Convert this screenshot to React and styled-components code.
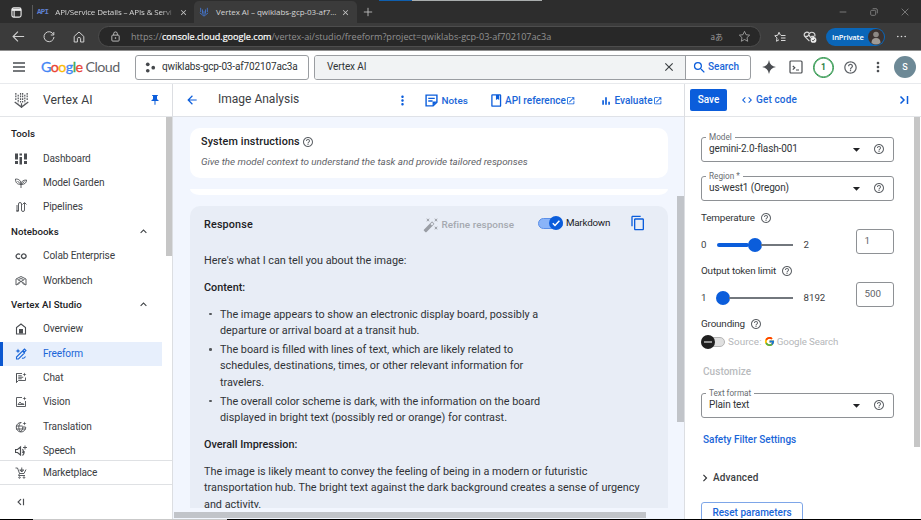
import React from "react";
import styled, { createGlobalStyle } from "styled-components";
import { FcGoogle } from "react-icons/fc";
import {
  MdClose, MdSearch, MdHelpOutline, MdMoreVert, MdArrowBack, MdPushPin, MdCode,
  MdOpenInNew, MdContentCopy, MdExpandLess, MdChevronRight, MdArrowDropDown, MdAutoFixHigh,
} from "react-icons/md";

const GlobalStyle = createGlobalStyle`
  * { box-sizing: border-box; }
  html, body { margin: 0; padding: 0; overflow: hidden; background: #fff; }
  body { font-family: Roboto, "Liberation Sans", sans-serif; color: #3c4043; font-size: 10px; }
`;

const blue = "#0b5ddb";

const Page = styled.div`
  width: 921px;
  height: 520px;
  display: flex;
  flex-direction: column;
  overflow: hidden;
  background: #fff;
`;

/* Anything on one line: a label with its own size, colour and tracking. */
const Label = styled.span`
  white-space: nowrap;
  font-family: ${(p) => p.$font || "inherit"};
  font-size: ${(p) => p.$size || 10}px;
  font-weight: ${(p) => p.$weight || 400};
  color: ${(p) => p.$color || "#3c4043"};
  letter-spacing: ${(p) => p.$track || 0}px;
  margin-left: ${(p) => p.$ml || 0}px;
  line-height: 16px;
`;

const Svg = styled.svg`
  flex: none;
  display: block;
  width: ${(p) => p.$s || 12}px;
  height: ${(p) => p.$s || 12}px;
  margin-left: ${(p) => p.$ml || 0}px;
  color: ${(p) => p.$color || "currentColor"};
`;

const Slot = styled.span`
  flex: none;
  display: flex;
  font-size: ${(p) => p.$s || 12}px;
  color: ${(p) => p.$color || "#5f6368"};
  margin-left: ${(p) => p.$ml || 0}px;
`;

const Spacer = styled.div`
  flex: 1;
`;

/* ---------- browser chrome ---------- */
const segoe = '"Open Sans", "Noto Sans", sans-serif';

const TopStrip = styled.div`
  height: 1px;
  flex: none;
  background: linear-gradient(90deg, #2d2d2d 379px, #0f5fae 379px 412px, #a9adad 412px 542px, #2d2d2d 542px);
`;

const TabStrip = styled.div`
  height: 22px;
  flex: none;
  display: flex;
  align-items: center;
  background: #2d2d2d;
  padding-left: 11px;
`;

const TabDivider = styled.div`
  width: 1px;
  height: 14px;
  margin-left: 10px;
  background: #5a5a5a;
`;

const Tab = styled.div`
  height: 22px;
  width: ${(p) => p.$w}px;
  display: flex;
  align-items: center;
  background: ${(p) => (p.$active ? "#3b3b3b" : "transparent")};
  border-radius: 5px 5px 0 0;
`;

const TabTitle = styled(Label)`
  width: ${(p) => p.$w}px;
  mask-image: ${(p) => (p.$fade ? "linear-gradient(90deg, #000 88%, transparent)" : "none")};
`;

const AddressRow = styled.div`
  height: 27px;
  flex: none;
  display: flex;
  align-items: center;
  background: #3b3b3b;
  padding-left: 12px;
`;

const UrlBar = styled.div`
  width: 663px;
  height: 21px;
  margin-left: 13px;
  border: 1px solid #4d4d4d;
  border-radius: 11px;
  background: #282828;
  display: flex;
  align-items: center;
`;

const Url = styled(Label)`
  b { font-weight: 400; color: #fff; -webkit-text-stroke: 0.2px #fff; }
`;

const PrivatePill = styled.div`
  width: 59px;
  height: 18px;
  margin-left: 9px;
  border-radius: 9px;
  background: #0a66b8;
  display: flex;
  align-items: center;
  padding-left: 6px;
`;

const Avatar = styled.div`
  width: ${(p) => p.$s}px;
  height: ${(p) => p.$s}px;
  flex: none;
  border-radius: 50%;
  background: ${(p) => p.$bg};
  margin-left: ${(p) => p.$ml || 0}px;
  display: flex;
  align-items: center;
  justify-content: center;
  overflow: hidden;
`;

function BrowserChrome() {
  return (
    <>
      <TopStrip />
      <TabStrip>
        <Svg viewBox="0 0 12 12" $s={11} fill="none" stroke="#eee" strokeWidth="1.2">
          <rect x="1" y="1" width="10" height="10" rx="2" />
          <path d="M1 3h10" strokeWidth="2.4" /><path d="M3.4 3v8" />
        </Svg>
        <TabDivider />
        <Tab $w={161}>
          <Label $font='"Liberation Mono", monospace' $size={7.4} $weight={700} $color="#5f80d0" $ml={4} $track={-0.7}>API</Label>
          <TabTitle $font={segoe} $size={8} $color="#d6d6d6" $ml={7} $w={121} $track={-0.14} $fade>API/Service Details – APIs &amp; Servi</TabTitle>
          <Slot $s={9} $color="#c8c8c8" $ml={3}><MdClose /></Slot>
        </Tab>
        <Tab $active $w={163}>
          <Svg viewBox="0 0 12 12" $s={10} $ml={5} fill="none" stroke="#4476cf" strokeWidth="1.1">
            <path d="M2 1v5M4.2 3v5M6 5v5M7.8 3v5M10 1v5M1 7l5 4 5-4" />
          </Svg>
          <TabTitle $font={segoe} $size={8} $color="#d6d6d6" $ml={7} $w={124} $track={-0.05}>Vertex AI – qwiklabs-gcp-03-af7...</TabTitle>
          <Slot $s={9} $color="#c8c8c8" $ml={1}><MdClose /></Slot>
        </Tab>
        <Svg viewBox="0 0 12 12" $s={10} $ml={6} stroke="#c8c8c8" strokeWidth="1"><path d="M6 1v10M1 6h10" /></Svg>
        <Spacer />
        <Svg viewBox="0 0 12 12" $s={8} stroke="#8c8c8c" strokeWidth="1.2"><path d="M1 6h10" /></Svg>
        <Svg viewBox="0 0 12 12" $s={8} $ml={23} fill="none" stroke="#8c8c8c" strokeWidth="1.2">
          <rect x="1" y="3.5" width="7.5" height="7.5" rx="1.5" /><path d="M4 1h5q2 0 2 2v5" />
        </Svg>
        <Svg viewBox="0 0 12 12" $s={8} $ml={23} stroke="#8c8c8c" strokeWidth="1.2"><path d="M1 1l10 10M11 1L1 11" /></Svg>
        <Slot $ml={12} />
      </TabStrip>
      <AddressRow>
        <Svg viewBox="0 0 12 12" $s={13} fill="none" stroke="#d0d0d0"><path d="M11.2 6H1M5.5 1.5L1 6l4.500 4.500" /></Svg>
        <Svg viewBox="0 0 12 12" $s={12} $ml={18} fill="none" stroke="#d0d0d0"><path d="M10.500 3.500A5 5 0 1 0 11 6M10.800 1v3H7.800" /></Svg>
        <Svg viewBox="0 0 12 12" $s={12} $ml={18} fill="none" stroke="#d0d0d0"><path d="M1.200 5.400L6 1l4.800 4.400V11H7.600V7.500q0-1-1.600-1t-1.600 1V11H1.200z" strokeLinejoin="round" /></Svg>
        <UrlBar>
          <Svg viewBox="0 0 12 12" $s={11} $ml={11} fill="none" stroke="#c4c4c4">
            <rect x="2" y="4.500" width="8" height="6.500" rx="1" /><path d="M4 4.500V3a2 2 0 0 1 4 0v1.500" /><circle cx="6" cy="7.700" r=".5" />
          </Svg>
          <Url $font={segoe} $size={9.1} $color="#929292" $ml={10} $track={0}>
            https://<b>console.cloud.google.com</b>/vertex-ai/studio/freeform?project=qwiklabs-gcp-03-af702107ac3a
          </Url>
          <Spacer />
          <Label $font='"Noto Sans CJK JP", sans-serif' $size={8} $color="#9a9a9a">aあ</Label>
          <Svg viewBox="0 0 24 24" $s={13} $ml={15} fill="none" stroke="#a5a5a5" strokeWidth="1.600">
            <path d="M12 2.500l2.900 6.200 6.600.8-4.900 4.600 1.300 6.700L12 17.500l-5.900 3.300 1.300-6.700L2.500 9.500l6.600-.8z" strokeLinejoin="round" />
          </Svg>
          <Slot $ml={9} />
        </UrlBar>
        <Svg viewBox="0 0 24 24" $s={12} $ml={13} fill="none" stroke="#d8d8d8" strokeWidth="2">
          <path d="M13 8.500L10 2.500 7.500 8.500 1.500 9.500l4.500 4.200-1 6.800 5-3M14 9h9M14 14h9M14 19h9" strokeLinejoin="round" />
        </Svg>
        <Svg viewBox="0 0 24 24" $s={14} $ml={17} fill="none" stroke="#d8d8d8" strokeWidth="2">
          <path d="M11 19L3 11C0 6 6 1 11 6c5-5 11 0 9 5M3 11h5l2-3 3 5 2-2h4" />
          <circle cx="18" cy="17" r="5" fill="#eee" stroke="none" /><path d="M15.500 17l2 2 3-4" stroke="#444" strokeWidth="1.500" />
        </Svg>
        <PrivatePill>
          <Label $font={segoe} $size={7.6} $weight={600} $color="#fff" $track={-0.15}>InPrivate</Label>
          <Svg viewBox="0 0 16 16" $s={16} $ml={4}>
            <circle cx="8" cy="8" r="8" fill="#3b3230" /><circle cx="8" cy="5.500" r="2.800" fill="#8d8884" /><path d="M3.500 14q0-5 4.500-5t4.500 5q-4.500 3-9 0" fill="#a09b96" />
          </Svg>
        </PrivatePill>
        <Svg viewBox="0 0 12 12" $s={11} $ml={11} fill="#e0e0e0"><circle cx="2" cy="6" r=".9" /><circle cx="6" cy="6" r=".9" /><circle cx="10" cy="6" r=".9" /></Svg>
      </AddressRow>
    </>
  );
}

/* ---------- Google Cloud header ---------- */
const CloudHeader = styled.header`
  height: 34px;
  flex: none;
  display: flex;
  align-items: center;
  border-top: 1px solid #8f8f8f;
  border-bottom: 1px solid #e8eaed;
  padding-left: 12px;
`;

const Logo = styled.div`
  font-family: Lato, sans-serif;
  font-size: 14.3px;
  line-height: 18px;
  width: 80px;
  margin-left: 15px;
  white-space: nowrap;
  color: #5f6368;
  letter-spacing: -0.58px;
`;

const LogoLetter = styled.span`
  color: ${(p) => p.$c};
  -webkit-text-stroke: 0.3px ${(p) => p.$c};
`;

const ProjectButton = styled.div`
  width: 174px;
  height: 25px;
  margin-left: 14px;
  border: 1px solid #9a9da1;
  border-radius: 3px;
  display: flex;
  align-items: center;
  padding-left: 9px;
`;

const SearchBox = styled.div`
  width: 437px;
  height: 25px;
  margin-left: 5px;
  border: 1px solid #9a9da1;
  border-radius: 3px;
  display: flex;
  overflow: hidden;
`;

const SearchField = styled.div`
  width: 371px;
  background: #f1f3f4;
  border-right: 1px solid #9a9da1;
  display: flex;
  align-items: center;
  padding: 0 9px 0 12px;
`;

const SearchAction = styled.div`
  flex: 1;
  display: flex;
  align-items: center;
  padding-left: 6px;
`;

const TrialBadge = styled.div`
  width: 21px;
  height: 21px;
  margin-left: 10px;
  border: 1.500px solid #1e8e3e;
  border-radius: 50%;
  box-shadow: inset 0 0 0 0.5px #1e8e3e;
  display: flex;
  align-items: center;
  justify-content: center;
`;

function Header() {
  return (
    <CloudHeader>
      <Svg viewBox="0 0 14 14" $s={14} stroke="#4a4d51" strokeWidth="1.400"><path d="M1 3h12M1 7h12M1 11h12" /></Svg>
      <Logo>
        <LogoLetter $c="#4285f4">G</LogoLetter><LogoLetter $c="#ea4335">o</LogoLetter><LogoLetter $c="#fbbc04">o</LogoLetter>
        <LogoLetter $c="#4285f4">g</LogoLetter><LogoLetter $c="#34a853">l</LogoLetter><LogoLetter $c="#ea4335">e</LogoLetter> Cloud
      </Logo>
      <ProjectButton>
        <Svg viewBox="0 0 12 12" $s={11} fill="#45484c"><circle cx="3" cy="2.500" r="2" /><circle cx="3" cy="9.500" r="2" /><circle cx="9" cy="6.200" r="2" /></Svg>
        <Label $size={10} $ml={6} $color="#303336" $track={-0.15}>qwiklabs-gcp-03-af702107ac3a</Label>
      </ProjectButton>
      <SearchBox>
        <SearchField>
          <Label $size={10} $track={-0.12} $color="#303336">Vertex AI</Label>
          <Spacer />
          <Slot $s={14} $color="#3c4043"><MdClose /></Slot>
        </SearchField>
        <SearchAction>
          <Slot $s={15} $color={blue}><MdSearch /></Slot>
          <Label $size={10} $weight={500} $color="#1a66d8" $ml={1} $track={0.02}>Search</Label>
        </SearchAction>
      </SearchBox>
      <Svg viewBox="0 0 14 14" $s={14} $ml={11} fill="#4a4d51"><path d="M7 0Q7.900 6.100 14 7 7.900 7.900 7 14 6.100 7.900 0 7 6.100 6.100 7 0z" /></Svg>
      <Svg viewBox="0 0 14 14" $s={14} $ml={13} fill="none" stroke="#4a4d51" strokeWidth="1.200">
        <rect x="1" y="1" width="12" height="12" rx="1" /><path d="M3.800 6l2 1.800-2 1.800M7 10h3" />
      </Svg>
      <TrialBadge><Label $size={8.5} $weight={700} $color="#1e7e3e">1</Label></TrialBadge>
      <Slot $s={15} $ml={9}><MdHelpOutline /></Slot>
      <Slot $s={16} $ml={12} $color="#4a4d51"><MdMoreVert /></Slot>
      <Avatar $s={22} $bg="#6d8996" $ml={8}><Label $size={9} $weight={500} $color="#fff">S</Label></Avatar>
    </CloudHeader>
  );
}

/* ---------- sidebar ---------- */
const Main = styled.div`
  flex: 1;
  min-height: 0;
  display: flex;
`;

const Sidebar = styled.nav`
  width: 173px;
  flex: none;
  border-right: 1px solid #dcdee2;
  display: flex;
  flex-direction: column;
`;

const SideHead = styled.div`
  height: 33px;
  flex: none;
  display: flex;
  align-items: center;
  padding: 0 11px 0 13px;
  border-bottom: 1px solid #e3e5e8;
`;

const SideScroll = styled.div`
  height: 343px;
  flex: none;
  display: flex;
  overflow: hidden;
`;

const SideList = styled.div`
  width: 162px;
  padding-top: 5px;
`;

const SideTrack = styled.div`
  width: 6px;
  height: 139px;
  margin-left: 4px;
  background: #c6c6c6;
`;

const SideRow = styled.div`
  height: 24.400px;
  display: flex;
  align-items: center;
  padding-left: ${(p) => (p.$active ? 12 : 15)}px;
  background: ${(p) => (p.$active ? "#e7effc" : "transparent")};
  border-left: ${(p) => (p.$active ? "3px solid #0b57d0" : "none")};
`;

const SideSection = styled(SideRow)`
  padding: 0 12px 0 11px;
`;

const SideFoot = styled.div`
  height: 25px;
  flex: none;
  display: flex;
  align-items: center;
  border-top: 1px solid #dfe1e4;
  border-bottom: 1px solid #dfe1e4;
  padding-left: 15px;
`;

const SideCollapse = styled.div`
  flex: 1;
  display: flex;
  align-items: center;
  padding-left: 16px;
`;

const star = <path d="M19 1l1 3 3 1-3 1-1 3-1-3-3-1 3-1z" fill="currentColor" stroke="none" />;
const sideIcons = {
  dashboard: <path d="M0 1h6v12H0zM0 16h6v6H0zM9 1h5v4H9zM9 8h5v15H9zM18 1h6v12h-6zM18 16h6v6h-6z" fill="currentColor" stroke="none" />,
  garden: <path d="M12 22v-7M12 15C4 15 1 11 1 4c7 0 11 3 11 11zM12 15c0-6 4-9 11-9 0 6-4 9-11 9zM5 8l6 6M19 9l-6 5" />,
  pipelines: <path d="M4 20h3V6q0-3 3-3t3 3v12q0 3 3 3t3-3V4M15 7l4-4 4 4M4 8v12M2 20h5" />,
  colab: <path d="M10 9a4.600 4.600 0 1 0 0 7M17.500 7.800a4.600 4.600 0 1 0 .1 0z" strokeWidth="2.600" />,
  workbench: <path d="M2 20V8l10-5 10 5v12M2 20l7-3M22 20l-7-3M5 9l14 8M19 9L5 17M7 9q5-4 10 0" />,
  overview: <><path d="M3 22V9l9-7 9 7v13z" strokeWidth="2.200" /><path d="M8 12h8v9H8z" fill="currentColor" stroke="none" /></>,
  freeform: <><path d="M3 22v-4L15 6l4 4L7 22zM16 5l3-3 3 3-3 3zM14 20q4 2 7-3" strokeWidth="2.200" /><path d="M6 1l1.300 3.700L11 6 7.300 7.300 6 11 4.700 7.300 1 6l3.700-1.300z" fill="currentColor" stroke="none" /></>,
  chat: <><path d="M14 3H3v18l4-4h14v-6M6.500 7.500h7M6.500 10.500h10M6.500 13.500h7M3 3v18" />{star}</>,
  vision: <><path d="M14 3H3v18h18V10M6 17l4-5 3 4 2-2 3 3z" />{star}</>,
  translation: <><path d="M13 3a9.500 9.500 0 1 0 8.500 9M2 10h13M2 16h19M11 3q-7 9 0 19q6-5 4.500-11M21 12h-6" />{star}</>,
  speech: <><path d="M1 9h4l6-5v16l-6-5H1zM15 8q3 4 0 8M18 12q1 6-3 9" strokeWidth="2.400" /><path d="M20 1v8M16 5h8" /></>,
  cart: <><path d="M1 2h4l4 11h9l4-8M9 13l-2 4h13M9 6h9M13.500 1v9M10 6l3.500 4L17 6" /><circle cx="9" cy="21" r="1.500" /><circle cx="18" cy="21" r="1.500" /></>,
};

function SideItem({ icon, text, active }) {
  const tone = active ? "#1a66d8" : "#4a4d51";
  return (
    <SideRow $active={active}>
      <Svg viewBox="0 0 24 24" $s={12} $color={tone} fill="none" stroke="currentColor" strokeWidth="1.800">{sideIcons[icon]}</Svg>
      <Label $size={10.1} $ml={16} $color={active ? "#1a66d8" : "#3c4043"} $track={-0.13}>{text}</Label>
    </SideRow>
  );
}

function SideTitle({ text, open }) {
  return (
    <SideSection>
      <Label $size={9.700} $weight={500} $color="#202124" $track={0.05}>{text}</Label>
      <Spacer />
      {open && <Slot $s={13} $color="#3c4043"><MdExpandLess /></Slot>}
    </SideSection>
  );
}

function SideNav() {
  return (
    <Sidebar>
      <SideHead>
        <Svg viewBox="0 0 16 18" $s={17} fill="none" stroke="#55585c" strokeWidth="1.300">
          <path d="M2 1v8M14 1v8M4.500 3v9M11.500 3v9M7 1v11M9.200 1v11" strokeDasharray="1.800 1" /><path d="M.8 10.500L8 16l7.200-5.500M8 12v5" />
        </Svg>
        <Label $size={12.200} $ml={13} $track={0.05}>Vertex AI</Label>
        <Spacer />
        <Slot $s={12} $color={blue}><MdPushPin /></Slot>
      </SideHead>
      <SideScroll>
        <SideList>
          <SideTitle text="Tools" />
          <SideItem icon="dashboard" text="Dashboard" />
          <SideItem icon="garden" text="Model Garden" />
          <SideItem icon="pipelines" text="Pipelines" />
          <SideTitle text="Notebooks" open />
          <SideItem icon="colab" text="Colab Enterprise" />
          <SideItem icon="workbench" text="Workbench" />
          <SideTitle text="Vertex AI Studio" open />
          <SideItem icon="overview" text="Overview" />
          <SideItem icon="freeform" text="Freeform" active />
          <SideItem icon="chat" text="Chat" />
          <SideItem icon="vision" text="Vision" />
          <SideItem icon="translation" text="Translation" />
          <SideItem icon="speech" text="Speech" />
        </SideList>
        <SideTrack />
      </SideScroll>
      <SideFoot>
        <Svg viewBox="0 0 24 24" $s={12} fill="none" stroke="#4a4d51" strokeWidth="1.800">{sideIcons.cart}</Svg>
        <Label $size={10.1} $ml={16} $track={-0.13}>Marketplace</Label>
      </SideFoot>
      <SideCollapse>
        <Svg viewBox="0 0 12 12" $s={10} fill="none" stroke="#4a4d51" strokeWidth="1.400"><path d="M6 2.500L2.500 6 6 9.500M9 2v8" /></Svg>
      </SideCollapse>
    </Sidebar>
  );
}

/* ---------- centre ---------- */
const Centre = styled.section`
  width: 511px;
  flex: none;
  display: flex;
  flex-direction: column;
  background: #f2f6fe;
`;

const CentreHead = styled.div`
  height: 33px;
  flex: none;
  display: flex;
  align-items: center;
  padding-left: 12px;
  background: #fff;
  border-bottom: 1px solid #dfe2e8;
`;

const PageTitle = styled(Label)`
  width: 88px;
  padding-bottom: 2px;
`;

const HeadLink = styled.div`
  display: flex;
  align-items: center;
  margin-left: ${(p) => p.$ml}px;
  width: ${(p) => p.$w}px;
  padding-top: 1px;
`;

const CentreBody = styled.div`
  height: 391px;
  display: grid;
  grid-template-columns: 478px 7px;
  column-gap: 9px;
  padding-left: 17px;
`;

const CentreColumn = styled.div`
  padding-top: 11px;
  height: 391px;
  display: flex;
  flex-direction: column;
`;

const SystemCard = styled.div`
  height: 50px;
  flex: none;
  border-radius: 10px;
  background: #fff;
  padding: 6px 11px;
`;

const PromptEdge = styled.div`
  height: 6px;
  flex: none;
  margin-top: 11px;
  background: #fff;
  border-radius: 0 0 10px 10px / 0 0 6px 6px;
`;

const ResponseCard = styled.div`
  flex: 1;
  min-height: 0;
  margin-top: 11px;
  border-radius: 10px 10px 0 0;
  background: #e8edf6;
  padding: 0 14px;
  overflow: hidden;
`;

const Row = styled.div`
  display: flex;
  align-items: center;
  height: ${(p) => p.$h}px;
  padding-left: ${(p) => p.$pl || 0}px;
  margin-top: ${(p) => p.$mt || 0}px;
`;

const CardActions = styled.div`
  display: flex;
  align-items: center;
  padding-bottom: 3px;
  margin-left: 23px;
`;

const Refine = styled.div`
  display: flex;
  align-items: center;
  width: 92px;
  margin-left: 170px;
`;

const Prose = styled.div`
  margin-top: 9.500px;
  font-size: 10.830px;
  line-height: 16.280px;
  color: #303336;
  white-space: nowrap;
  p { margin: 0 0 10.800px; }
  strong { font-weight: 500; color: #202124; }
  ul { margin: 0 0 10.800px; padding: 0 0 0 16px; list-style: none; }
  li { display: flex; margin-bottom: 2.800px; margin-left: -11px; }
  li:last-child { margin-bottom: 0; }
`;

const Bullet = styled.i`
  width: 2.500px;
  height: 2.500px;
  margin: 6px 8.500px 0 0;
  border-radius: 50%;
  background: #55585c;
`;

const VBar = styled.div`
  width: 7px;
  height: ${(p) => p.$h}px;
  margin-top: ${(p) => p.$mt}px;
  background: #c1c4c9;
`;

const HBar = styled.div`
  width: 472px;
  height: 6px;
  margin: 4px 0 0 1px;
  background: #c1c4c9;
`;

const ToggleTrack = styled.div`
  width: ${(p) => p.$w}px;
  height: ${(p) => p.$h}px;
  border-radius: 6px;
  border: 1px solid ${(p) => p.$edge};
  background: ${(p) => p.$fill};
  display: flex;
  align-items: center;
  justify-content: ${(p) => (p.$on ? "flex-end" : "flex-start")};
`;

const Thumb = styled(Svg)`
  margin: 0 -1px;
`;

function Toggle({ on }) {
  return (
    <ToggleTrack $on={on} $w={on ? 25 : 24} $h={on ? 11 : 10} $edge={on ? "#5b8fe8" : "#b5b5b5"} $fill={on ? "#8ab4f8" : "#e0e0e0"}>
      <Thumb viewBox="0 0 14 14" $s={14} fill="none" strokeWidth="1.500">
        <circle cx="7" cy="7" r="7" fill={on ? blue : "#1f1f1f"} />
        <path d={on ? "M3.800 7.200l2.200 2.300 4.400-4.700" : "M3 7h8"} stroke={on ? "#fff" : "#bbb"} />
      </Thumb>
    </ToggleTrack>
  );
}

function Workspace() {
  return (
    <Centre>
      <CentreHead>
        <Slot $s={14} $color={blue}><MdArrowBack /></Slot>
        <PageTitle $size={12} $ml={19}>Image Analysis</PageTitle>
        <Slot $s={15} $ml={89} $color={blue}><MdMoreVert /></Slot>
        <HeadLink $ml={14.5} $w={66}>
          <Svg viewBox="0 0 24 24" $s={13} fill="none" stroke={blue} strokeWidth="2.600">
            <path d="M2 2h20v13l-7 7H2zM6 8h12M6 13h8" /><path d="M22 14l-8 8v-8z" fill={blue} stroke="none" />
          </Svg>
          <Label $size={9.9} $weight={500} $color="#1a66d8" $ml={4}>Notes</Label>
        </HeadLink>
        <HeadLink $ml={-0.5} $w={110}>
          <Svg viewBox="0 0 20 24" $s={13} fill="none" stroke={blue} strokeWidth="2.400">
            <rect x="1.500" y="1.500" width="16" height="21" rx="1" /><path d="M9 2h6v9l-3-2-3 2z" fill={blue} stroke="none" />
          </Svg>
          <Label $size={10} $weight={500} $color="#1a66d8" $ml={2}>API reference</Label>
          <Slot $s={9.500} $ml={0.5} $color={blue}><MdOpenInNew /></Slot>
        </HeadLink>
        <HeadLink $ml={0.5} $w={66}>
          <Svg viewBox="0 0 12 12" $s={10} fill={blue}><path d="M1.500 5h2v5.500h-2zM5 1.500h2v9H5zM8.700 7h2v3.500h-2z" /></Svg>
          <Label $size={10} $weight={500} $color="#1a66d8" $ml={4}>Evaluate</Label>
          <Slot $s={9.500} $ml={0.5} $color={blue}><MdOpenInNew /></Slot>
        </HeadLink>
      </CentreHead>
      <CentreBody>
        <CentreColumn>
          <SystemCard>
            <Row $h={16}>
              <Label $size={10.800} $weight={500} $color="#202124" $track={0.13}>System instructions</Label>
              <Slot $s={12} $ml={2}><MdHelpOutline /></Slot>
            </Row>
            <Row $h={16} $mt={4}>
              <Label as="em" $size={9.850} $color="#5f6368" $track={-0.02}>Give the model context to understand the task and provide tailored responses</Label>
            </Row>
          </SystemCard>
          <PromptEdge />
          <ResponseCard>
            <Row $h={37}>
              <Label $size={10.800} $weight={500} $color="#202124" $track={0.15}>Response</Label>
              <Refine>
                <Slot $s={16} $color="#9a9ea5"><MdAutoFixHigh /></Slot>
                <Label $size={9.9} $weight={500} $color="#a5a9b0" $ml={2.5} $track={0.08}>Refine response</Label>
              </Refine>
              <CardActions>
                <Toggle on />
                <Label $size={9.8} $ml={3} $color="#202124" $track={-0.2}>Markdown</Label>
                <Slot $s={16} $ml={19.5} $color={blue}><MdContentCopy /></Slot>
              </CardActions>
            </Row>
            <Prose>
              <p>Here's what I can tell you about the image:</p>
              <p><strong>Content:</strong></p>
              <ul>
                <li><Bullet /><span>The image appears to show an electronic display board, possibly a<br />departure or arrival board at a transit hub.</span></li>
                <li><Bullet /><span>The board is filled with lines of text, which are likely related to<br />schedules, destinations, times, or other relevant information for<br />travelers.</span></li>
                <li><Bullet /><span>The overall color scheme is dark, with the information on the board<br />displayed in bright text (possibly red or orange) for contrast.</span></li>
              </ul>
              <p><strong>Overall Impression:</strong></p>
              <p>The image is likely meant to convey the feeling of being in a modern or futuristic<br />transportation hub. The bright text against the dark background creates a sense of urgency<br />and activity.</p>
            </Prose>
          </ResponseCard>
        </CentreColumn>
        <VBar $h={226} $mt={79} />
      </CentreBody>
      <HBar />
    </Centre>
  );
}

/* ---------- settings panel ---------- */
const Panel = styled.aside`
  width: 237px;
  flex: none;
  border-left: 1px solid #dcdee2;
  display: flex;
  flex-direction: column;
`;

const PanelHead = styled.div`
  height: 33px;
  flex: none;
  display: flex;
  align-items: center;
  padding: 0 11px 0 5px;
  border-bottom: 1px solid #e3e5e8;
`;

const SaveButton = styled.div`
  width: 37px;
  height: 22px;
  border-radius: 2px;
  background: ${blue};
  display: flex;
  align-items: center;
  justify-content: center;
`;

const PanelBody = styled.div`
  flex: 1;
  min-height: 0;
  display: flex;
  justify-content: space-between;
  overflow: hidden;
`;

const Settings = styled.div`
  width: 209px;
  padding: 20px 0 0 16px;
  display: flex;
  flex-direction: column;
`;

const Field = styled.fieldset`
  width: 193px;
  height: 29px;
  flex: none;
  margin: ${(p) => p.$mt || 0}px 0 0;
  padding: 0 8px 0 7px;
  min-width: 0;
  border: 1px solid #8e9195;
  border-radius: 3px;
  legend { padding: 0 3px; margin-left: -3px; font-size: 8.200px; line-height: 9px; color: #6a6d72; height: 9px; }
`;

const NumberBox = styled.div`
  width: 38px;
  height: 25px;
  border: 1px solid #8e9195;
  border-radius: 3px;
  padding: 3px 7.5px;
`;

const SliderRow = styled.div`
  height: 25px;
  flex: none;
  display: flex;
  align-items: center;
  margin-top: ${(p) => p.$mt}px;
`;

const Scale = styled.div`
  display: flex;
  align-items: center;
  width: 155px;
  padding-top: 7px;
`;

const End = styled(Label)`
  width: ${(p) => p.$w}px;
`;

const Filled = styled.div`
  width: ${(p) => p.$w}px;
  height: 4px;
  border-radius: 2px;
  background: ${blue};
`;

const Knob = styled.div`
  width: 14px;
  height: 14px;
  margin: 0 -1px;
  border-radius: 50%;
  background: ${blue};
`;

const Rest = styled.div`
  width: ${(p) => p.$w}px;
  height: 2px;
  background: #72777d;
  margin-right: 10.5px;
`;

const ResetButton = styled.div`
  width: 102px;
  height: 25px;
  flex: none;
  margin-top: 17px;
  border: 1px solid #7ea6e8;
  border-radius: 3px;
  display: flex;
  justify-content: center;
  padding-top: 2px;
`;

const PanelTrack = styled.div`
  width: 6px;
  height: 330px;
  margin-right: 1px;
  background: #c6c6c6;
`;

function Select({ label, value, mt }) {
  return (
    <Field $mt={mt}>
      <legend>{label}</legend>
      <Row $h={14}>
        <Label $size={10} $color="#303336" $track={-0.12}>{value}</Label>
        <Spacer />
        <Slot $s={17} $color="#202124"><MdArrowDropDown /></Slot>
        <Slot $s={12} $ml={8.5}><MdHelpOutline /></Slot>
      </Row>
    </Field>
  );
}

function Caption({ text, mt, gap = 5 }) {
  return (
    <Row $h={14} $mt={mt}>
      <Label $size={9.9} $color="#303336" $track={-0.17}>{text}</Label>
      <Slot $s={12} $ml={gap}><MdHelpOutline /></Slot>
    </Row>
  );
}

function Range({ min, max, value, filled, rest, mt }) {
  return (
    <SliderRow $mt={mt}>
      <Scale>
        <End $size={9.7} $w={16}>{min}</End>
        <Filled $w={filled} /><Knob /><Rest $w={rest} />
        <Label $size={9.7}>{max}</Label>
      </Scale>
      <NumberBox><Label $size={9.8} $color="#5f6368">{value}</Label></NumberBox>
    </SliderRow>
  );
}

function SettingsPanel() {
  return (
    <Panel>
      <PanelHead>
        <SaveButton><Label $size={10} $weight={500} $color="#fff">Save</Label></SaveButton>
        <Slot $s={12} $ml={14} $color={blue}><MdCode /></Slot>
        <Label $size={10} $weight={500} $color="#1a66d8" $ml={3} $track={0.13}>Get code</Label>
        <Spacer />
        <Svg viewBox="0 0 12 12" $s={12} fill="none" stroke={blue} strokeWidth="1.500"><path d="M2.500 2.500L6 6 2.500 9.500M9.500 2v8" /></Svg>
      </PanelHead>
      <PanelBody>
        <Settings>
          <Select label="Model" value="gemini-2.0-flash-001" mt={-4} />
          <Select label="Region *" value="us-west1 (Oregon)" mt={10} />
          <Caption text="Temperature" mt={9.5} />
          <Range min="0" max="2" value="1" filled={32} rest={32} mt={4} />
          <Caption text="Output token limit" mt={10} />
          <Range min="1" max="8192" value="500" filled={0} rest={64} mt={4} />
          <Caption text="Grounding" mt={10} />
          <Row $h={14} $mt={4}>
            <Toggle />
            <Label $size={9.9} $color="#b4b6b9" $ml={3} $track={0.1}>Source:</Label>
            <Slot $s={11} $ml={2}><FcGoogle /></Slot>
            <Label $size={9.7} $color="#b4b6b9" $ml={2} $track={-0.1}>Google Search</Label>
          </Row>
          <Row $h={14} $mt={16} $pl={2}><Label $size={10} $weight={500} $color="#b9bbbe" $track={0.05}>Customize</Label></Row>
          <Select label="Text format" value="Plain text" mt={10.5} />
          <Row $h={14} $mt={15} $pl={2}><Label $size={10} $weight={500} $color="#1a66d8" $track={0}>Safety Filter Settings</Label></Row>
          <Row $h={14} $mt={24}>
            <Slot $s={14} $ml={-3} $color="#303336"><MdChevronRight /></Slot>
            <Label $size={10} $weight={500} $ml={1} $track={0.15}>Advanced</Label>
          </Row>
          <ResetButton><Label $size={10} $weight={500} $color="#1a66d8" $track={0}>Reset parameters</Label></ResetButton>
        </Settings>
        <PanelTrack />
      </PanelBody>
    </Panel>
  );
}

const BottomEdge = styled.div`
  height: 1px;
  flex: none;
  background: linear-gradient(90deg, #000 33px, #c9c9c9 33px 227px, #000 227px);
`;

export default function App() {
  return (
    <Page>
      <GlobalStyle />
      <BrowserChrome />
      <Header />
      <Main>
        <SideNav />
        <Workspace />
        <SettingsPanel />
      </Main>
      <BottomEdge />
    </Page>
  );
}
